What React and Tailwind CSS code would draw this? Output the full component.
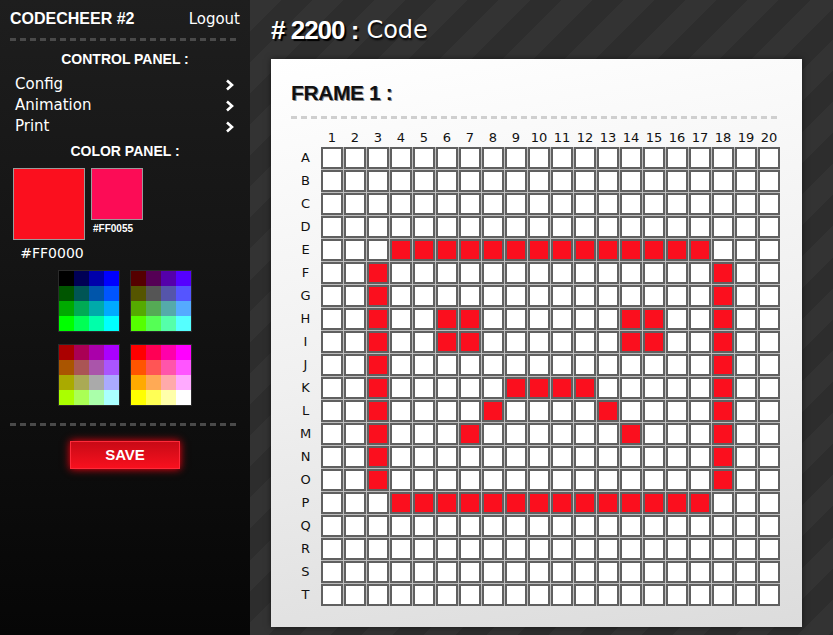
import React from 'react';

const ROWS = 'ABCDEFGHIJKLMNOPQRST'.split('');
const COLS = Array.from({ length: 20 }, (_, i) => i + 1);
const HEX = ['00', '55', 'aa', 'ff'];

const isRed = (r, c) => {
  if ((r === 4 || r === 15) && c >= 4 && c <= 17) return true;
  if (r >= 5 && r <= 14 && (c === 3 || c === 18)) return true;
  if ((r === 7 || r === 8) && [6, 7, 14, 15].includes(c)) return true;
  if (r === 10 && c >= 9 && c <= 12) return true;
  if (r === 11 && (c === 8 || c === 13)) return true;
  if (r === 12 && (c === 7 || c === 14)) return true;
  return false;
};

const Chevron = () => (
  <svg width="9" height="12" viewBox="0 0 9 12" fill="none">
    <polyline points="2,1.5 7,6 2,10.5" stroke="#fff" strokeWidth="2.6" strokeLinejoin="miter" />
  </svg>
);

const Dashes = ({ color }) => (
  <div className={`h-[3px] w-full ${color}`} />
);

const Palette = ({ red }) => (
  <div className="grid grid-cols-[repeat(4,15px)] border border-[#2a2a2a]">
    {HEX.map((g) =>
      HEX.map((b) => (
        <div key={g + b} className="h-[15px]" style={{ backgroundColor: `#${red}${g}${b}` }} />
      ))
    )}
  </div>
);

const Sidebar = () => {
  const menu = ['Config', 'Animation', 'Print'];
  return (
    <div className="w-[250px] h-[635px] shrink-0 bg-[linear-gradient(180deg,#1e1e1e,#060606)] px-[10px] text-white flex flex-col shadow-[2px_0_6px_#000]">
      <div className="h-[38px] flex items-center justify-between">
        <span className="font-['Liberation_Sans',sans-serif] font-bold text-[16px]">CODECHEER #2</span>
        <span className="font-['DejaVu_Sans',sans-serif] text-[15px]">Logout</span>
      </div>
      <Dashes color="bg-[repeating-linear-gradient(90deg,#4a4a4a_0_6px,transparent_6px_10px)]" />
      <div className="mt-[8px] h-[20px] leading-[20px] text-center font-['Liberation_Sans',sans-serif] font-bold text-[14px]">
        CONTROL PANEL :
      </div>
      <div className="mt-[5px] px-[5px] font-['DejaVu_Sans',sans-serif] text-[15px]">
        {menu.map((m) => (
          <div key={m} className="h-[21px] flex items-center justify-between pr-[1px]">
            <span>{m}</span>
            <Chevron />
          </div>
        ))}
      </div>
      <div className="mt-[4px] h-[20px] leading-[20px] text-center font-['Liberation_Sans',sans-serif] font-bold text-[14px]">
        COLOR PANEL :
      </div>
      <div className="mt-[7px] ml-[3px] flex gap-[6px]">
        <div className="flex flex-col items-center w-[72px]">
          <div className="w-[72px] h-[72px] bg-[#fb0f1e] border border-[#9a9a9a]" />
          <div className="mt-[3px] h-[20px] leading-[20px] font-['DejaVu_Sans',sans-serif] text-[14px] pl-[6px]">#FF0000</div>
        </div>
        <div className="flex flex-col">
          <div className="w-[52px] h-[52px] bg-[#fc0c56] border border-[#9a9a9a]" />
          <div className="mt-[3px] ml-[2px] leading-[12px] font-['Liberation_Sans',sans-serif] font-bold text-[10px]">#FF0055</div>
        </div>
      </div>
      <div className="mt-[7px] grid grid-cols-[62px_62px] gap-x-[10px] gap-y-[12px] justify-center">
        {HEX.map((r) => (
          <Palette key={r} red={r} />
        ))}
      </div>
      <div className="mt-[17px]">
        <Dashes color="bg-[repeating-linear-gradient(90deg,#4a4a4a_0_6px,transparent_6px_10px)]" />
      </div>
      <div className="mt-[15px] flex justify-center">
        <div className="w-[110px] h-[28px] flex items-center justify-center bg-[linear-gradient(180deg,#c80a16,#f8101e)] border border-[#ff2a3a] shadow-[0_0_8px_#ff0010] font-['Liberation_Sans',sans-serif] font-bold text-[15px]">
          SAVE
        </div>
      </div>
    </div>
  );
};

const Grid = () => (
  <div className="mt-[9px] flex gap-px">
    <div className="w-[29px] flex flex-col gap-px">
      <div className="h-[18px]" />
      {ROWS.map((r) => (
        <div key={r} className="h-[22px] flex items-center justify-center text-[13px] text-[#111]">
          {r}
        </div>
      ))}
    </div>
    <div className="flex flex-col gap-px">
      <div className="grid grid-cols-[repeat(20,22px)] gap-px h-[18px]">
        {COLS.map((c) => (
          <div key={c} className="flex items-center justify-center text-[13px] text-[#111]">
            {c}
          </div>
        ))}
      </div>
      <div className="grid grid-cols-[repeat(20,22px)] gap-px bg-[#bdbdbd]">
        {ROWS.map((r, ri) =>
          COLS.map((c) => (
            <div
              key={r + c}
              className={`h-[22px] border-2 border-[#606060] ${isRed(ri, c) ? 'bg-[#fb0f1e]' : 'bg-white'}`}
            />
          ))
        )}
      </div>
    </div>
  </div>
);

export default function App() {
  return (
    <div className="w-[833px] h-[635px] flex overflow-hidden bg-[#303030]">
      <Sidebar />
      <div className="flex-1 pl-[21px] bg-[repeating-linear-gradient(135deg,#333_0px,#333_22px,#2d2d2d_22px,#2d2d2d_44px)]">
        <div className="h-[60px] flex items-center text-white">
          <span className="font-['Liberation_Sans',sans-serif] font-bold text-[26px] tracking-[-1px] [text-shadow:2px_2px_1px_#000]">
            # 2200 :
          </span>
          <span className="ml-[8px] font-['DejaVu_Sans',sans-serif] text-[24px] [text-shadow:1px_2px_2px_#000]">Code</span>
        </div>
        <div className="-mt-px w-[531px] h-[568px] bg-[linear-gradient(170deg,#ffffff,#f0f0f0_50%,#dcdcdc)] shadow-[0_0_6px_rgba(0,0,0,0.5)] pl-[20px] pr-[22px] pt-[22px] font-['DejaVu_Sans',sans-serif]">
          <div className="h-[24px] leading-[24px] font-['Liberation_Sans',sans-serif] font-bold text-[21px] tracking-[-0.4px] text-[#111] [text-shadow:1px_1px_0_#888]">
            FRAME 1 :
          </div>
          <div className="mt-[11px]">
            <Dashes color="bg-[repeating-linear-gradient(90deg,#cfcfcf_0_6px,transparent_6px_10px)]" />
          </div>
          <Grid />
        </div>
      </div>
    </div>
  );
}
